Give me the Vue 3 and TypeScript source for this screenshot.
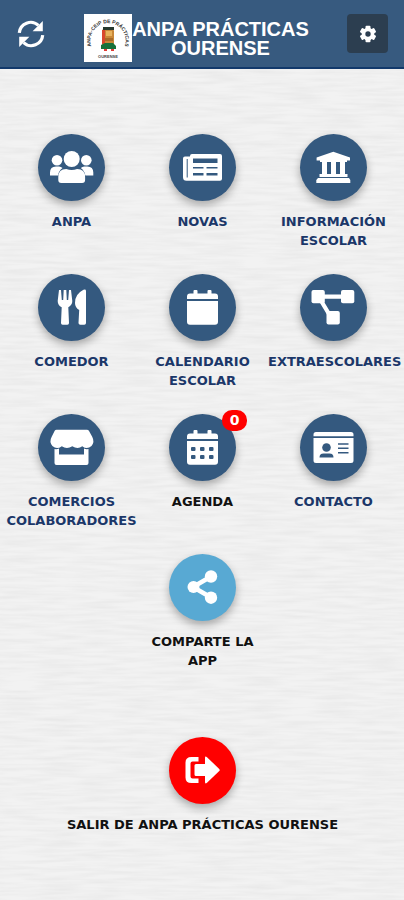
<script setup lang="ts">
interface Tile {
  id: string
  label: string
  dark?: boolean
  badge?: number
}

const tiles: Tile[] = [
  { id: 'anpa', label: 'ANPA' },
  { id: 'novas', label: 'NOVAS' },
  { id: 'informacion', label: 'INFORMACIÓN ESCOLAR' },
  { id: 'comedor', label: 'COMEDOR' },
  { id: 'calendario', label: 'CALENDARIO ESCOLAR' },
  { id: 'extraescolares', label: 'EXTRAESCOLARES' },
  { id: 'comercios', label: 'COMERCIOS COLABORADORES' },
  { id: 'agenda', label: 'AGENDA', dark: true, badge: 0 },
  { id: 'contacto', label: 'CONTACTO' },
  { id: 'compartir', label: 'COMPARTE LA APP', dark: true },
]
</script>

<template>
  <div class="page">
    <svg class="paper" aria-hidden="true">
      <filter id="grain" x="0" y="0" width="100%" height="100%">
        <feTurbulence type="fractalNoise" baseFrequency="0.025 0.28" numOctaves="2" seed="8" />
        <feColorMatrix values="0 0 0 0 0.5  0 0 0 0 0.5  0 0 0 0 0.5  0.3 0 0 0 -0.1" />
      </filter>
      <rect width="100%" height="100%" filter="url(#grain)" />
    </svg>

    <header class="bar">
      <button class="refresh" type="button" aria-label="Actualizar">
        <svg viewBox="0 0 28 28" width="28" height="28">
          <g fill="none" stroke="#fff" stroke-width="3.2">
            <path d="M2.3 12.8A11.4 11.4 0 0 1 21.4 5.4" />
            <path d="M25.7 15.2A11.4 11.4 0 0 1 6.6 22.6" />
          </g>
          <path fill="#fff" d="M25.8 1v10.2H15.6zM2.2 27V16.800h10.200z" />
        </svg>
      </button>
      <div class="brand">
        <svg class="logo" viewBox="0 0 48 48" width="48" height="48" aria-hidden="true">
          <rect width="48" height="48" fill="#fff" />
          <path id="ring" d="M10 37A17.500 17.500 0 1 1 38 37" fill="none" />
          <text class="ring-text"><textPath href="#ring" startOffset="50%">ANPA-CEIP DE PRÁCTICAS</textPath></text>
          <rect x="18" y="15" width="12" height="17" rx="2" fill="#c98738" />
          <path d="M19 13h11v3H19z" fill="#26382d" />
          <path d="M18 16h3v14h-3z" fill="#d9472d" />
          <path d="M22 17h6v5h-6z" fill="#e8b25d" />
          <path d="M21 24h8v3h-8z" fill="#a86a28" />
          <path d="M17 31l4-2h8l3 3v3H17z" fill="#16703a" />
          <path d="M20 35h3v2h-3zM27 35h3v2h-3z" fill="#df3b35" />
          <text class="town" x="24" y="44">OURENSE</text>
        </svg>
        <h1>ANPA PRÁCTICAS OURENSE</h1>
      </div>
      <button class="settings" type="button" aria-label="Axustes">
        <svg viewBox="0 0 18 18" width="18" height="18">
          <g fill="#fff">
            <rect v-for="a in [0, 60, 120]" :key="a" x="6.5" y="0.8" width="5" height="16.4" rx="1" :transform="`rotate(${a} 9 9)`" />
            <circle cx="9" cy="9" r="6.3" />
          </g>
          <circle cx="9" cy="9" r="2.7" fill="#2c3e50" />
        </svg>
      </button>
    </header>

    <main>
      <nav class="grid">
        <a v-for="t in tiles" :key="t.id" href="#" class="tile" :class="[t.id, { dark: t.dark }]">
          <span class="disc">
            <svg viewBox="0 0 67 67" fill="#fff" aria-hidden="true">
              <g v-if="t.id === 'anpa'">
                <circle cx="19" cy="26.3" r="5.3" /><circle cx="48.3" cy="26.3" r="5.3" />
                <path d="M12 41.5v-3q0-6 6-6h3q2 0 3.500 1.500-4 3-4.500 7.500zM55.300 41.500v-3q0-6-6-6h-3q-2 0-3.500 1.500 4 3 4.500 7.500z" />
                <circle cx="33.7" cy="25" r="8" />
                <path d="M20.3 46v-3q0-8 8-8 5.400 2 10.800 0 8 0 8 8v3q0 3-3 3H23.300q-3 0-3-3z" />
              </g>
              <g v-else-if="t.id === 'novas'">
                <path fill-rule="evenodd" d="M23 20h28q2 0 2 2v22.700q0 2-2 2H17.500q-3.500 0-3.500-3.500V24.500q0-2 2-2h5V22q0-2 2-2zM17.700 25v18.500h1V25zM24 24.500v4.500h24.500v-4.500zM24 33v1.500h10.500V33zM37.500 33v1.500h11V33zM24 39v2.500h10.500V39zM37.500 39v2.500h11V39z" />
              </g>
              <g v-else-if="t.id === 'informacion'">
                <path d="M33.300 17.700L50 23.500v3H16.600v-3zM20 26h27v2H20zM22 28h5v13h-5zM31 28h5v13h-5zM40 28h5v13h-5zM19.500 40h28v3h-28zM18 44h31l1.300 2v3H16.300v-3z" />
              </g>
              <g v-else-if="t.id === 'comedor'">
                <path d="M21 16h2l.8 10h1.400L25.700 16h2.600l.5 10h1.400L31 16h2l1.300 11q0 4-4 6.300L31 49q0 1.700-1.600 1.700h-4.800Q23 50.700 23 49l.7-15.700q-4-2-4-6.300zM48 17v32q0 1.700-1.700 1.700h-4Q40.500 50.700 40.500 49l.7-13q-4.200-2.500-4.200-7 0-9 8.500-13.200 2.500-.8 2.500 1.200z" />
              </g>
              <g v-else-if="t.id === 'calendario' || t.id === 'agenda'">
                <path d="M18 25v-2.500q0-3 3-3h3.500V17q0-1 1-1h2q1 0 1 1v2.500h10V17q0-1 1-1h2q1 0 1 1v2.500H46q3 0 3 3V25zM18 27h31v20.700q0 3-3 3H21q-3 0-3-3z" />
                <g v-if="t.id === 'agenda'" fill="#34597f">
                  <rect v-for="n in 6" :key="n" :x="22 + ((n - 1) % 3) * 9" :y="n > 3 ? 41 : 33" width="4.5" height="4" rx="1" />
                </g>
              </g>
              <g v-else-if="t.id === 'extraescolares'">
                <rect x="11.5" y="16" width="13.3" height="13.3" rx="2" />
                <rect x="41" y="16" width="13.3" height="13.3" rx="2" />
                <rect x="26.5" y="37" width="13.3" height="13.5" rx="2" />
                <path d="M22 22.700h22M20 25l9 15" stroke="#fff" stroke-width="4.200" />
              </g>
              <g v-else-if="t.id === 'comercios'">
                <path d="M18.500 15.700h30.400q1.300 0 2 1l3.300 6q2.700 5-.7 9.300-4.500 4-9.200.2-4.500 3.600-10 0-5.500 3.600-10.500 0-5 3.800-9.400-.2-3.500-4.300-.7-9.300l3-6q.6-1 1.800-1zM16.500 35q2.500.5 4.500-.5v6h25v-6q2 1 4.500.5v14q0 2-2 2h-30q-2 0-2-2z" />
              </g>
              <g v-else-if="t.id === 'contacto'">
                <path fill-rule="evenodd" d="M16 18h35q2.500 0 2.500 2.500v26q0 2.500-2.500 2.500H16q-2.500 0-2.500-2.500v-26Q13.500 18 16 18zM13.500 22.200v1.800h40v-1.800zM38 29.300v1.500h10.500v-1.500zM38 33.500V35h10.500v-1.500zM38 38v1.500h10.500V38zM19.500 43.500h14q0-4-4-4h-6q-4 0-4 4z" />
                <circle cx="26.5" cy="33.5" r="4.3" fill="#34597f" />
              </g>
              <g v-else>
                <path d="M42 22.500L24 33l18 10.500" fill="none" stroke="#fff" stroke-width="4.5" />
                <circle cx="24.5" cy="33" r="6" /><circle cx="42" cy="22.5" r="6.2" /><circle cx="42" cy="43.7" r="6.2" />
              </g>
            </svg>
            <span v-if="t.badge !== undefined" class="badge">{{ t.badge }}</span>
          </span>
          <span class="label">{{ t.label }}</span>
        </a>
      </nav>

      <a href="#" class="tile exit dark">
        <span class="disc">
          <svg viewBox="0 0 67 67" fill="#fff" aria-hidden="true">
            <path d="M29.500 20v4.500h-6q-2 0-2 2v13q0 2 2 2h6V46h-7q-6 0-6-5.500v-15Q16.500 20 22.500 20z" />
            <path d="M25.500 28.500q0-1.500 1.500-1.500h9v-6q0-2.500 2-.8l12 11.500q1.500 1.300 0 2.600L38 45.800q-2 1.700-2-.8v-6h-9q-1.500 0-1.500-1.500z" />
          </svg>
        </span>
        <span class="label">SALIR DE ANPA PRÁCTICAS OURENSE</span>
      </a>
    </main>
  </div>
</template>

<style>
body {
  margin: 0;
  background: #eee;
}
</style>

<style scoped>
.page {
  position: relative;
  min-height: 100vh;
  overflow: hidden;
  background: #f2f2f2;
  font-family: 'DejaVu Sans', Verdana, sans-serif;
}
.paper {
  position: absolute;
  inset: 0;
  width: 100%;
  height: 100%;
}
.bar {
  position: relative;
  box-sizing: border-box;
  display: flex;
  align-items: flex-start;
  justify-content: space-between;
  height: 69px;
  padding: 14px 16px 0;
  background: #375a7f;
  border-bottom: 2px solid #12396b;
}
button {
  display: flex;
  align-items: center;
  justify-content: center;
  height: 39px;
  padding: 0;
  border: 0;
}
.refresh {
  width: 30px;
  background: none;
}
.settings {
  width: 41px;
  border-radius: 4px;
  background: #2c3e50;
}
.brand {
  display: flex;
}
.ring-text {
  font: bold 5px 'Liberation Sans', sans-serif;
  fill: #333;
  text-anchor: middle;
}
.town {
  font: bold 4px 'Liberation Sans', sans-serif;
  fill: #444;
  text-anchor: middle;
}
h1 {
  width: 178px;
  margin: 6px 0 0;
  color: #fff;
  font: bold 20px/19px 'Liberation Sans', Arial, sans-serif;
  text-align: center;
}
main {
  position: relative;
  padding: 65px 5px 40px 6px;
}
.grid {
  display: grid;
  grid-template-columns: repeat(3, minmax(0, 1fr));
  row-gap: 24px;
}
.tile {
  display: flex;
  flex-direction: column;
  align-items: center;
  min-height: 116px;
  color: #1b3769;
  text-decoration: none;
}
.dark {
  color: #111;
}
.compartir {
  grid-column: 2;
}
.disc {
  position: relative;
  width: 67px;
  height: 67px;
  margin-bottom: 11px;
  border-radius: 50%;
  background: #34597f;
  box-shadow: 0 4px 9px rgba(0, 0, 0, 0.3);
}
.disc svg {
  display: block;
}
.compartir .disc {
  background: #58a9d3;
}
.exit {
  margin-top: 67px;
}
.exit .disc {
  background: #f00;
}
.badge {
  position: absolute;
  top: -4px;
  right: -11px;
  width: 25px;
  border-radius: 10px;
  background: #f00;
  color: #fff;
  font-size: 14px;
  font-weight: bold;
  line-height: 21px;
  text-align: center;
}
.label {
  width: 100%;
  font-size: 13px;
  font-weight: bold;
  line-height: 19px;
  text-align: center;
}
</style>
